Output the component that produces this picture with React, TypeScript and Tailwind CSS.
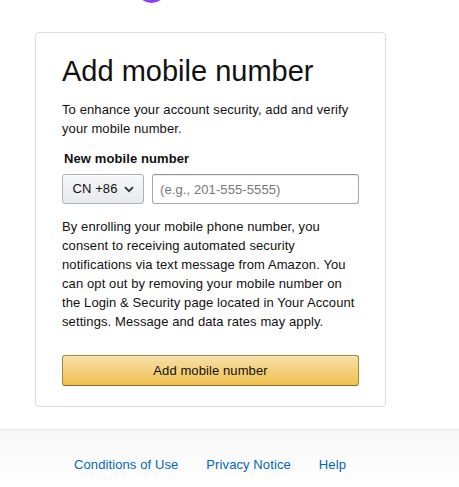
import React from "react";

export default function App() {
  const [phone, setPhone] = React.useState("");

  return (
    <div className="min-h-[487px] bg-white font-['Liberation_Sans',Arial,sans-serif] text-[13px] tracking-[0.1px] text-[#111]">
      {/* logo bottom, cut off at the top of the window */}
      <div className="relative h-[32px] w-[420px] overflow-hidden">
        <div className="absolute left-[136px] top-[-28px] h-[31px] w-[31px] rounded-full bg-[#8a3ffc]" />
      </div>

      <div className="ml-[35px] w-[351px] rounded-[4px] border border-[#ddd] px-[26px] pb-[20px] pt-[20px]">
        <h1 className="text-[29px] font-normal leading-[36px] tracking-normal text-[#111]">Add mobile number</h1>
        <p className="mt-[11px] leading-[19px] text-[#111]">
          To enhance your account security, add and verify your mobile number.
        </p>

        <label className="mt-[11px] block pl-[2px] text-[13px] font-bold leading-[19px]">New mobile number</label>
        <div className="mt-[6px] flex gap-[8px]">
          <button className="flex h-[30px] w-[82px] items-center justify-center gap-[6px] rounded-[3px] border border-[#adb1b8] bg-gradient-to-b from-[#f7f8fa] to-[#e7e9ec] text-[13px] text-[#111] shadow-[inset_0_1px_0_rgba(255,255,255,0.6)]">
            CN +86
            <svg width="10" height="7" viewBox="0 0 10 7">
              <path d="M1 1.2 5 5.2 9 1.2" fill="none" stroke="#333" strokeWidth="1.8" />
            </svg>
          </button>
          <input
            value={phone}
            onChange={(e) => setPhone(e.target.value)}
            placeholder="(e.g., 201-555-5555)"
            className="h-[30px] flex-1 rounded-[3px] border border-[#a6a6a6] border-t-[#949494] px-[7px] text-[13px] text-[#111] shadow-[inset_0_1px_0_rgba(0,0,0,0.07)] outline-none placeholder:text-[#777]"
          />
        </div>

        <p className="mt-[13px] leading-[19px] text-[#111]">
          By enrolling your mobile phone number, you consent to receiving automated security notifications via text
          message from Amazon. You can opt out by removing your mobile number on the Login &amp; Security page located
          in Your Account settings. Message and data rates may apply.
        </p>

        <button className="mt-[24px] h-[31px] w-full rounded-[3px] border border-[#a88734] border-b-[#846a29] bg-gradient-to-b from-[#f7dfa5] to-[#f0c14b] text-[13px] text-[#111] shadow-[inset_0_1px_0_rgba(255,255,255,0.4)]">
          Add mobile number
        </button>
      </div>

      <div className="mt-[22px] h-[2px] bg-gradient-to-b from-[#e7e7e7] to-[#f7f7f7]" />
      <div className="bg-gradient-to-b from-[#f7f7f7] to-white pb-[14px] pt-[24px]">
        <div className="flex w-[420px] justify-center gap-[28px] text-[13px] leading-[19px] text-[#0066c0]">
          <a href="#">Conditions of Use</a>
          <a href="#">Privacy Notice</a>
          <a href="#">Help</a>
        </div>
      </div>
    </div>
  );
}
